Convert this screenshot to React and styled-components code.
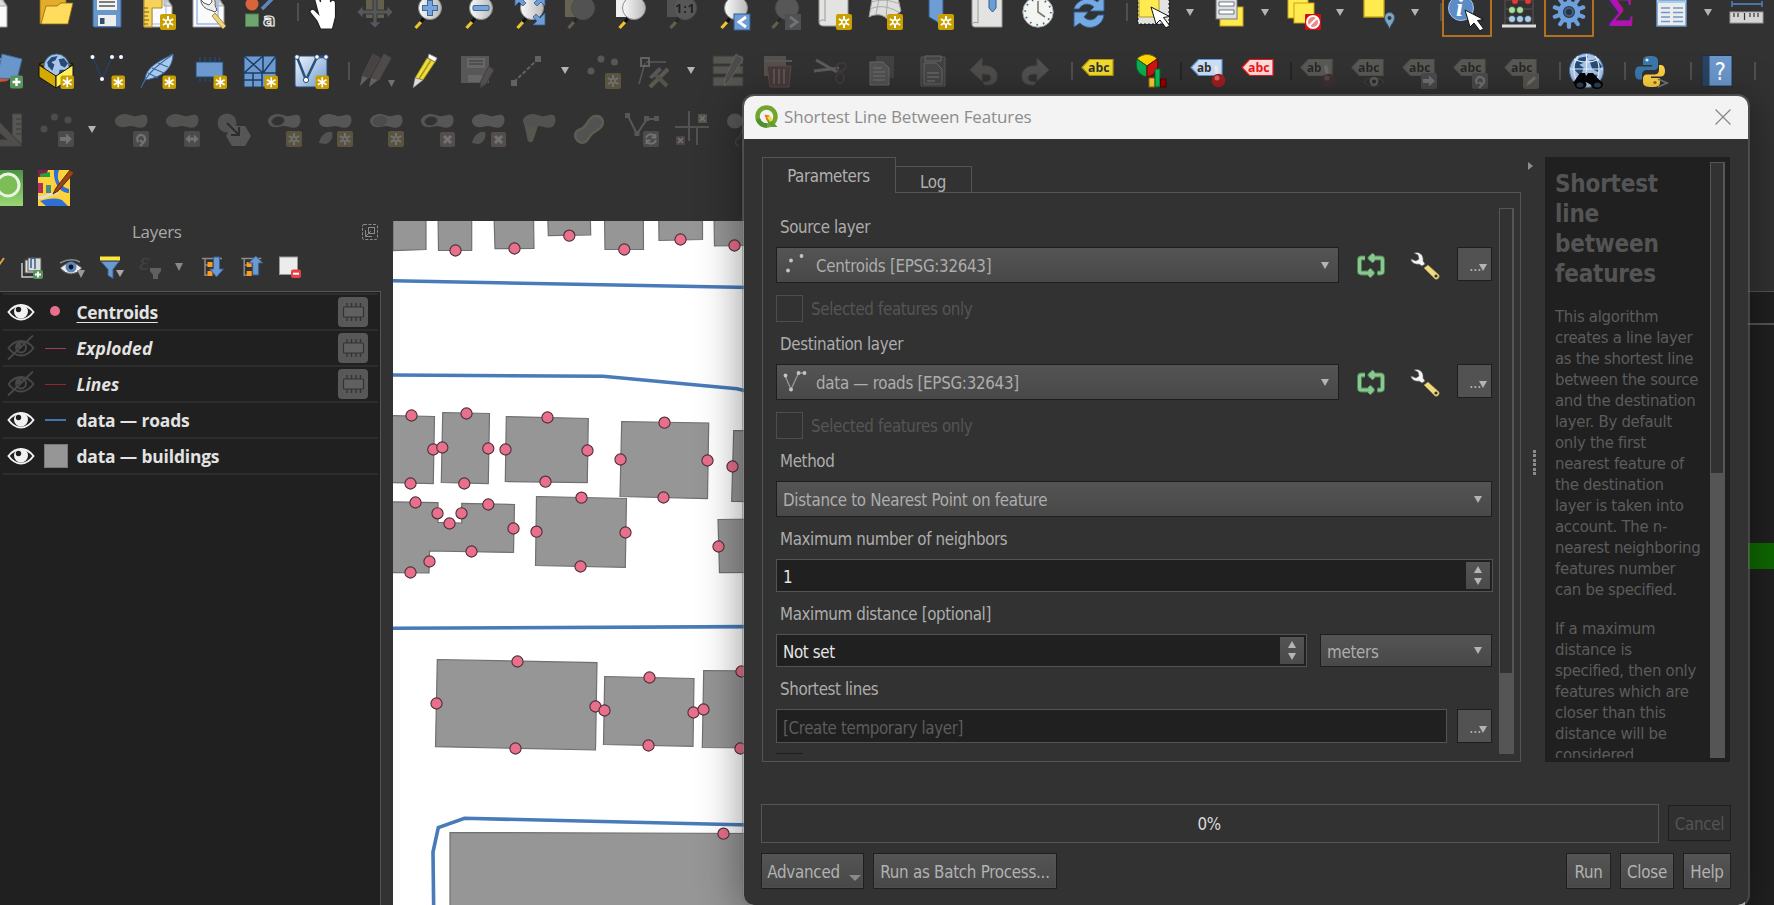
import React from "react";
import styled, { createGlobalStyle, css } from "styled-components";

const ui = '"DejaVu Sans Condensed", "Noto Sans", sans-serif';
const segoe = '"Open Sans", "Noto Sans", sans-serif';

const GlobalStyle = createGlobalStyle`
  html, body { margin: 0; background: #323232; overflow: hidden; }
  * { box-sizing: border-box; }
`;

/* ---------- main window ---------- */
const Desktop = styled.div`
  position: relative;
  width: 1774px;
  height: 905px;
  overflow: hidden;
  background: #323232;
  display: flex;
  flex-direction: column;
  font-family: ${ui};
`;
const Toolbars = styled.div`
  margin-top: -17px;
  height: 235px;
  flex: none;
`;
const ToolRow = styled.div`
  display: flex;
  align-items: center;
  height: 58.5px;
  margin-left: -21px;
  width: 1820px;
`;
const ToolSlot = styled.div`
  width: 51px;
  height: 50px;
  flex: none;
  display: flex;
  align-items: center;
  justify-content: center;
  ${(p) => p.$active && css`
    border: 2px solid #b5701f;
    background: #2f3133;
    margin-right: 1px;
    width: 50px;
  `}
  svg { display: block; overflow: visible; opacity: ${(p) => (p.$dim ? 0.31 : 1)}; filter: ${(p) => (p.$dim ? "saturate(.4)" : "none")}; }
`;
const Sep = styled.div`
  width: ${(p) => p.$w}px;
  flex: none;
  height: 18px;
  border-right: 2px solid ${(p) => (p.$dark ? "#252525" : "#505050")};
`;
const Arrow = styled.span`
  display: block;
  flex: none;
  width: 0;
  height: 0;
  border: solid transparent;
  border-width: 7px 4px 0;
  border-top-color: ${(p) => p.$c || "#b4b4b4"};
`;
const ArrowUp = styled.span`
  display: block;
  width: 0;
  height: 0;
  border: solid transparent;
  border-width: 0 4px 7px;
  border-bottom-color: #b4b4b4;
`;
const ArrowSlot = styled.div`
  width: 24px;
  flex: none;
  padding-left: 7px;
`;
const Body = styled.div`
  flex: 1;
  display: flex;
  min-height: 0;
`;

/* ---------- layers panel ---------- */
const LayersPanel = styled.section`
  width: 381px;
  flex: none;
  display: flex;
  flex-direction: column;
`;
const LayersHeader = styled.header`
  height: 30px;
  display: flex;
  align-items: center;
  padding: 0 3px 3px 132px;
  justify-content: space-between;
  font: 17px ${segoe};
  letter-spacing: -0.3px;
  color: #a9a9a9;
`;
const LayersTools = styled.div`
  height: 43px;
  flex: none;
  svg { display: block; }
`;
const LayerList = styled.div`
  flex: 1;
  background: #202020;
  border: 1px solid #555;
  border-width: 1px 1px 0 0;
  padding: 1px 2px 0 3px;
`;
const LayerRow = styled.div`
  height: 36px;
  display: flex;
  align-items: center;
  border-top: 2px solid #2d2d2d;
  padding: 0 10px 0 4px;
`;
const LayerSymbol = styled.span`
  width: 29px;
  margin-left: 6px;
  display: flex;
  justify-content: center;
`;
const LayerName = styled.span`
  flex: 1;
  margin-left: 6.5px;
  font: ${(p) => (p.$italic ? "italic" : "normal")} 700 17.4px ${segoe};
  letter-spacing: ${(p) => p.$ls || -0.15}px;
  color: #e3e3e3;
  text-decoration: ${(p) => (p.$underline ? "underline" : "none")};
  text-underline-offset: 3px;
  text-decoration-thickness: 1px;
  white-space: nowrap;
`;
const Dot = styled.i`
  width: 10px; height: 10px; border-radius: 50%; background: #e8708c; margin: -2px 2px 0 0;
`;
const Dash = styled.i`
  width: 21px; height: ${(p) => p.$h}px; background: ${(p) => p.$c};
`;
const Swatch = styled.i`
  width: 24px; height: 24px; background: #969696; border: 1px solid #777;
`;
const ChipBadge = styled.span`
  width: 30px; height: 30px; border-radius: 4px; background: #585858;
  svg { display: block; }
`;

/* ---------- map and side dock ---------- */
const Gutter = styled.div`width: 12px; flex: none;`;
const MapSvg = styled.svg`
  display: block;
  flex: none;
  width: 1352px;
  height: 684px;
  margin-top: 3px;
  background: #fff;
`;
const SideDock = styled.aside`
  flex: 1;
  padding-top: 73px;
  display: flex;
  flex-direction: column;
  background: #323232;
`;
const DockHeader = styled.div`
  height: 34px; background: #202020; border: solid #555; border-width: 1px 0 2px;
`;
const DockBlock = styled.div`
  height: ${(p) => (p.$h ? p.$h + "px" : "auto")};
  flex: ${(p) => (p.$h ? "none" : 1)};
  background: ${(p) => (p.$green ? "#0f6a00" : "#202020")};
`;

/* ---------- dialog ---------- */
const Dialog = styled.div`
  position: absolute;
  left: 742px;
  top: 94px;
  width: 1008px;
  height: 813px;
  border: 2px solid rgba(110, 110, 110, 0.5);
  border-radius: 12px;
  background: #323232;
  background-clip: padding-box;
  box-shadow: 0 6px 44px rgba(0, 0, 0, 0.42);
  overflow: hidden;
`;
const TitleBar = styled.header`
  height: 43px;
  background: #f3f3f3;
  display: flex;
  align-items: center;
  padding: 0 17px 1px 11px;
  font: 17px ${segoe};
  letter-spacing: -0.12px;
  color: #8c8c8c;
  span { flex: 1; margin: -1px 0 0 5px; white-space: nowrap; }
`;
const Content = styled.div`
  padding: 18px 17px 0;
`;
const Upper = styled.div`
  display: flex;
  height: 605px;
  padding-left: 1px;
`;
const TabWidget = styled.div`
  width: 759px;
  display: flex;
  flex-direction: column;
`;
const TabBar = styled.div`
  display: flex;
  align-items: flex-end;
  height: 35px;
`;
const Tab = styled.div`
  width: ${(p) => p.$w}px;
  height: ${(p) => (p.$on ? 36 : 26)}px;
  margin-bottom: ${(p) => (p.$on ? -1 : 0)}px;
  border: 1px solid #555;
  border-bottom: 0;
  border-left-width: ${(p) => (p.$on ? 1 : 0)}px;
  background: #323232;
  position: relative;
  text-align: center;
  padding: ${(p) => (p.$on ? 8 : 5)}px 1px 0 0;
  font-size: 16.8px;
  line-height: 20px;
  letter-spacing: -0.36px;
  color: #b0b0b0;
`;
const TabPane = styled.div`
  flex: 1;
  min-height: 0;
  border: 1px solid #555;
  display: flex;
  padding: 0 6px 0 13px;
`;
const Form = styled.div`
  width: 717px;
  padding-top: 24px;
  overflow: hidden;
`;
const FieldLabel = styled.label`
  display: block;
  height: 20px;
  line-height: 20px;
  margin: 0 0 10px 4px;
  font-size: 16.8px;
  letter-spacing: -0.37px;
  color: #adadad;
  white-space: nowrap;
`;
const FieldRow = styled.div`
  display: flex;
  width: ${(p) => p.$w || 716}px;
  margin-bottom: ${(p) => p.$mb ?? 12}px;
  gap: ${(p) => p.$gap ?? 0}px;
`;
const Combo = styled.div`
  flex: ${(p) => (p.$w ? "none" : 1)};
  width: ${(p) => (p.$w ? p.$w + "px" : "auto")};
  height: ${(p) => p.$h || 36}px;
  border: 1px solid #1e1e1e;
  background: linear-gradient(#545454, #484848);
  display: flex;
  align-items: center;
  padding: 0 9px 0 6px;
  font-size: 16.8px;
  letter-spacing: -0.29px;
  color: #adadad;
  white-space: nowrap;
  span:first-of-type { flex: 1; padding-top: 2px; }
  svg { margin-right: 8px; flex: none; }
`;
const IconSlot = styled.div`
  width: 54px;
  display: flex;
  align-items: center;
  justify-content: center;
  padding-top: 2px;
`;
const MoreButton = styled.button`
  width: 35px;
  height: 34px;
  border: 1px solid #1e1e1e;
  background: #525252;
  padding: 8px 3px 0 11px;
  display: flex;
  align-items: center;
  font: 16px ${ui};
  letter-spacing: -0.6px;
  color: #b0b0b0;
  ${Arrow} { margin: -1px 0 0 -2px; }
  span:first-child { line-height: 16px; margin-top: -4px; }
`;
const Check = styled.div`
  display: flex;
  align-items: center;
  height: 27px;
  margin-bottom: 12px;
  gap: 8px;
  font-size: 16.8px;
  letter-spacing: -0.36px;
  color: #555;
  i { width: 27px; height: 27px; border: 1px solid #4e4e4e; }
  span { padding-top: 0; }
`;
const Input = styled.div`
  flex: 1;
  height: ${(p) => p.$h || 33}px;
  border: 1px solid #535353;
  background: #202020;
  display: flex;
  align-items: center;
  justify-content: space-between;
  padding: 1px 2px 0 6px;
  font-size: 16.8px;
  letter-spacing: -0.36px;
  color: ${(p) => (p.$ghost ? "#5c5c5c" : "#e6e6e6")};
  > span { padding-top: 2px; }
`;
const Spin = styled.div`
  width: 24px;
  height: 27px;
  margin-top: -1px;
  background: linear-gradient(#545454, #4a4a4a);
  display: flex;
  flex-direction: column;
  align-items: center;
  justify-content: center;
  gap: 5px;
`;
const ClippedCheck = styled.div`
  width: 27px;
  height: 1px;
  background: #1e1e1e;
`;
const ScrollTrack = styled.div`
  width: 15px;
  flex: none;
  margin: ${(p) => p.$m};
  background: #555;
`;
const ScrollThumb = styled.div`
  height: ${(p) => p.$h}px;
  background: #323232;
  border: 1px solid #565656;
  border-right-width: 2px;
`;
const Splitter = styled.div`
  width: 24px;
  padding-left: 7px;
  i {
    display: block; width: 0; height: 0; margin-top: 5px;
    border: solid transparent; border-width: 4px 0 4px 5px; border-left-color: #8e8e8e;
  }
`;
const Grip = styled.div`
  margin: 280px 0 0 5px;
  width: 3px;
  height: 25px;
  background: repeating-linear-gradient(#8a8a8a 0 3px, transparent 3px 4.4px);
`;
const HelpPane = styled.article`
  width: 185px;
  background: #202020;
  display: flex;
  justify-content: space-between;
`;
const HelpText = styled.div`
  padding-left: 10px;
  margin: 5px 0 4px;
  overflow: hidden;
  color: #5c5c5c;
  h2 { font: bold 24px/30px ${ui}; letter-spacing: -0.2px; margin: 7px 0 17px; color: #545454; }
  p { font: 16.6px/21px ${ui}; letter-spacing: -0.28px; margin: 0 0 18px; white-space: nowrap; }
`;
const Footer = styled.div`
  display: flex;
  gap: 9px;
  margin-top: ${(p) => p.$mt}px;
  width: 970px;
`;
const Progress = styled.div`
  flex: 1;
  height: 39px;
  border: 1px solid #555;
  text-align: center;
  line-height: 38px;
  font-size: 16.8px;
  letter-spacing: -0.4px;
  padding-right: 2px;
  color: #dadada;
`;
const Button = styled.button`
  width: ${(p) => p.$w}px;
  height: 36px;
  margin-top: ${(p) => (p.$off ? 1 : 0)}px;
  flex: none;
  border: 1px solid #1e1e1e;
  outline: 1px solid ${(p) => (p.$off ? "transparent" : "rgba(90,90,90,.25)")};
  outline-offset: -2px;
  background: ${(p) => (p.$off ? "#303030" : "linear-gradient(#545454, #484848)")};
  color: ${(p) => (p.$off ? "#545454" : "#b2b2b2")};
  font: 16.8px ${ui};
  letter-spacing: -0.26px;
  padding: 2px 0 0;
  display: flex;
  align-items: center;
  justify-content: center;
  white-space: nowrap;
  i { border: solid transparent; border-width: 6px 6px 0; border-top-color: #8a8a8a; margin: 12px -3px 0 9px; }
`;
const Spacer = styled.div`flex: 1;`;

/* ---------- icon fragments, drawn on a 36px grid ---------- */
const badgeFill = { star: "#c9a000", arrow: "#7b8590", rot: "#7b8590", h: "#7b8590", x: "#c08080", pen: "#b0a060", refresh: "#7b8590" };
const Flake = ({ s = 13.5, glyph = "star" }) => {
  const c = 36 - s / 2;
  const r = s * 0.34;
  const fill = badgeFill[glyph];
  return (
    <g>
      <rect x={36 - s} y={36 - s} width={s} height={s} rx="2" fill={fill} />
      <g stroke="#fff" strokeWidth={s / 8} fill="none" transform={`translate(${c} ${c})`}>
        {glyph === "star" && [0, 60, 120].map((a) => <path key={a} d={`M0 ${-r * 1.1}V${r * 1.1}`} transform={`rotate(${a})`} />)}
        {glyph === "star" && s > 14 && <circle r="2.2" fill={fill} strokeWidth="1.4" />}
        {glyph === "arrow" && <path d="M-6 -2h6v-3.5l6 5.5-6 5.500v-3.500h-6z" fill="#fff" stroke="none" />}
        {glyph === "h" && <path d="M-6.500 0l4.500-4.500v3h4v-3l4.500 4.500-4.500 4.500v-3h-4v3z" fill="#fff" stroke="none" />}
        {glyph === "x" && <path d="M-3.500 -3.500l7 7M3.500 -3.500l-7 7" strokeWidth="3" />}
        {glyph === "rot" && <path d="M-2.500 3a4 4 0 1 1 4.500 .5M-1 1l3 3-3 3" strokeWidth="2.200" />}
        {glyph === "pen" && <path d="M-4.500 4.500l2-4 6-5 1 2-5 5z" fill="#fff" strokeWidth=".5" />}
        {glyph === "refresh" && <path d="M-5 -1a5 5 0 0 1 9-1.500M4.500 -5v3.500h-4M5 1a5 5 0 0 1-9 1.500M-4.500 5v-3.500h4" strokeWidth="1.800" />}
      </g>
    </g>
  );
};
const Lens = ({ children, fill = "url(#lens)" }) => (
  <g>
    <path d="M7.500 34l5.500-6" stroke="#f0c22e" strokeWidth="3.200" />
    <path d="M13 28l3-4" stroke="#111" strokeWidth="3.200" />
    <circle cx="22" cy="14" r="11.500" fill={fill} stroke="#8c8c8c" strokeWidth="1" />
    {children}
  </g>
);
const Gem = ({ c = "#9a9c90" }) => (
  <path d="M3 7c5-6 12-4 17-2 4 1 8-2 12-1 4 2 3 10-1 12-5 2-9-1-14-1-5 1-9 2-12 0-3-2-4-6-2-8z" fill={c} />
);
const Ring = ({ hole = "#323232", children }) => (
  <g>
    <Gem c="#a8a8a8" />
    <ellipse cx="12" cy="10" rx="6.500" ry="4.500" transform="rotate(-12 12 10)" fill={hole} stroke="#777" />
    {children}
  </g>
);
const Tag = ({ fill, edge, text = "#333", label = "abc" }) => (
  <g>
    <path d="M2 14.500L9.500 6.500H33V22.500H9.500z" fill={fill} stroke={edge} strokeWidth="1.200" />
    <text x="8" y="18.500" textLength={label === "ab" ? 14.5 : 21.5} lengthAdjust="spacingAndGlyphs" fontFamily="Open Sans" fontWeight="700" fontSize="12" fill={text}>{label}</text>
  </g>
);
const Pin = () => (
  <g>
    <path d="M27 14l1.500 8" stroke="#eee" strokeWidth="3.500" strokeLinecap="round" />
    <circle cx="29.500" cy="27.500" r="6.800" fill="#a01f22" />
    <circle cx="28" cy="25" r="2.500" fill="#e88" opacity=".7" />
  </g>
);
const Page = ({ x = 4, w = 28 }) => (
  <g>
    <path d={`M${x} 0H${x + w - 8}L${x + w} 12V33H${x}z`} fill="#fbfbfb" stroke="#9a9a9a" />
    <path d={`M${x + w - 8} 3v9h8z`} fill="#ddd" stroke="#888" strokeWidth=".7" />
  </g>
);
const Pointer = ({ x, y }) => (
  <path transform={`translate(${x} ${y})`} d="M0 0l5 17 4-4 6 8 3.500-2.500-6-8 6-1z" fill="#fff" stroke="#111" strokeWidth="1" />
);
const Globe = ({ cx, cy, r }) => (
  <g>
    <circle cx={cx} cy={cy} r={r} fill="#a9c6ea" stroke="#456f9f" />
    <path transform={`translate(${cx} ${cy}) scale(${r / 12})`} d="M-9-4l4-5 6-1-2 4-4 2 3 2-2 6-4-4zM2-7l5-1 4 5-3 4-4-2-1-3zM3 3l5 0-3 6-3-1z" fill="#274b77" />
  </g>
);
const Wrench = () => (
  <g>
    <path d="M15 17l5 2 2-2-2-5c1-4-1-7-4-9l1 6-3 3-5-2-3-3c0 5 4 9 9 10z" transform="translate(4 -1)" fill="#eee" stroke="#555" strokeWidth="1" />
    <path d="M24 19l11 13-3 3-11-13z" fill="#efd67a" stroke="#8a7430" strokeWidth=".8" />
  </g>
);

const I = {
  newPage: <Page x={-4} w={24} />,
  folder: <g stroke="#8a6a10" strokeWidth=".8"><path d="M2 30V2h26v8" fill="#e3ad2b" /><path d="M3 30L8 12h11l4-3h12L30 30z" fill="#ffdc5c" /></g>,
  save: <g><path d="M4 2h28v31H5l-1-1z" fill="#6a97cb" stroke="#3c6290" /><rect x="8" y="0" width="20" height="16" fill="#f4f4f4" /><path d="M10 8h16M10 12h16M10 4h16" stroke="#555" strokeWidth="1.300" /><rect x="9" y="21" width="18" height="11" fill="#eee" /><rect x="11" y="24" width="4.500" height="6" fill="#2f4f77" /></g>,
  layout: <g><Page x={4} w={28} /><rect x="12" y="5" width="14" height="25" fill="none" stroke="#9cb6ee" /><path d="M4 0h18v14h-10V33H4z" fill="#f6d25a" stroke="#b08a1c" /><path d="M4 14h4M4 18h5M4 22h4M4 26h5M4 30h4" stroke="#7a5c00" /><Flake s={16} /></g>,
  manager: <g><Page x={2} w={31} /><rect x="6" y="4" width="21" height="26" fill="none" stroke="#9cb6ee" strokeWidth="1.500" /><Wrench /></g>,
  style: <g><circle cx="10" cy="10" r="6.500" fill="#d9643a" /><path d="M20 15L32 3" stroke="#5a88c0" strokeWidth="3.500" /><rect x="3.500" y="20" width="13" height="12.500" fill="#6fa56f" stroke="#4c7c4c" /><text x="21" y="32" fontFamily="DejaVu Sans" fontSize="18.500" fontWeight="700" fill="#444" stroke="#eee" strokeWidth="1.200">a</text></g>,
  hand: <path d="M14.500 35L11 27 4.500 19c-2-3 2-5 4-3l4 4L8.500 5c0-4 4-4 5 0l1 3V2c0-3 5-3 5 0v3c1-3 5-3 5 0v3c1-3 5-2 5 1v14l-3 12z" fill="#fff" stroke="#222" strokeWidth="1.200" />,
  pan: <g><rect x="9" y="6" width="18" height="18" fill="#e9c84a" /><path d="M18-2l5 6h-3v12h10v-4l6 6-6 6v-4H20v8h4l-6 6-6-6h4v-8H6v4l-6-6 6-6v4h10V4h-3z" fill="#9ab" stroke="#345" /></g>,
  zoomIn: <Lens><path d="M22 6v16M14 14h16" stroke="#3d6899" strokeWidth="6" /><path d="M22 7v14M15 14h14" stroke="#76a4dc" strokeWidth="4" /></Lens>,
  zoomOut: <Lens><rect x="14" y="11.500" width="16" height="5" rx="1" fill="#76a4dc" stroke="#3d6899" /></Lens>,
  zoomFull: <Lens><g fill="#6d9dd4" stroke="#335c8c" strokeWidth=".8"><path d="M35 31H23l4-4-4-4 3-3 4 4 5-5z" /><path d="M5 0v12l4-4 4 4 3-3-4-4 4-5z" /><path d="M35 0v12l-4-4-4 4-3-3 4-4-4-5z" /></g></Lens>,
  zoomSel: <g><rect x="4" y="0" width="20" height="23" fill="#e6cf52" /><Lens fill="#999" /></g>,
  zoomLayer: <g><rect x="4" y="0" width="18" height="23" fill="#f0f0ee" /><Lens /></g>,
  zoomNative: <g><rect x="4" y="0" width="18" height="23" fill="#999" /><Lens fill="#aaa"><text x="12" y="19" textLength="20" fontFamily="Open Sans" fontWeight="700" fontSize="13" fill="#000">1:1</text></Lens></g>,
  zoomLast: <Lens><rect x="20" y="20" width="16" height="16" fill="#6d9dd4" stroke="#335c8c" /><path d="M32 23l-7 5 7 5" fill="none" stroke="#fff" strokeWidth="2.800" /></Lens>,
  zoomNext: <Lens fill="#aaa"><rect x="20" y="20" width="16" height="16" fill="#8295a8" /><path d="M25 23l7 5-7 5" fill="none" stroke="#fff" strokeWidth="2.800" /></Lens>,
  newMap: <g><path d="M3 0h29v32H8c-3 0-5-1-5-4z" fill="#e3e3e1" stroke="#999" /><path d="M9 0v27c-2-2-4-1-6 1" fill="none" stroke="#999" /><Flake s={16} /></g>,
  new3d: <g><path d="M6 0h24l4 17-12 10c-6-8-14-7-20-4z" fill="#dededc" stroke="#999" /><path d="M13 0L9 20M21 0l-2 24M3 15c9-4 19-3 30 4M5 8c9-3 18-2 28 2" stroke="#aaa" fill="none" /><Flake s={16} /></g>,
  bmNew: <g><path d="M11 0h14v33l-7-6-7-4z" fill="#6d9dd4" stroke="#335c8c" /><Flake s={16} /></g>,
  bmShow: <g><path d="M3 0h30v33H6c-2 0-3-1-3-3z" fill="#e3e3e1" stroke="#999" /><path d="M9 0v29c-2-1-4-1-6 1" fill="none" stroke="#999" /><path d="M20 0h7v14l-3.500 4-3.500-4z" fill="#6d9dd4" stroke="#335c8c" /></g>,
  clock: <g><circle cx="18" cy="18" r="15.200" fill="#f4f4f0" stroke="#aaa" /><circle cx="18" cy="18" r="12.800" fill="none" stroke="#35639b" strokeWidth="1.800" strokeDasharray="1.500 5.200" /><path d="M18 7v11l7 5" fill="none" stroke="#777" strokeWidth="1.600" /></g>,
  refresh: <g fill="#76a9e0" stroke="#2f5f98" strokeWidth="1"><path d="M3 15c2-9 16-14 23-7l7-6v15H19l4-4c-6-5-12-3-15 2z" /><path d="M33 21c-2 13-17 16-24 8l-6 4V18h14l-4 5c5 5 11 3 14-2z" /></g>,
  select: <g><path d="M2 0h31v30H2z" fill="#e3e3e3" stroke="#111" strokeDasharray="2 2" /><rect x="3" y="-2" width="20" height="25" fill="#ffea4f" stroke="#b9991a" /><Pointer x={15} y={13} /></g>,
  selForm: <g><rect x="9" y="13" width="23" height="19" fill="#ffea4f" stroke="#c9a310" /><rect x="5" y="0" width="21" height="25" fill="#dbe0e6" stroke="#777" /><path d="M8 8h15v4H8zM8 16h15v4H8z" fill="#fff" stroke="#555" strokeWidth=".8" /></g>,
  deselect: <g><rect x="2" y="-3" width="20" height="27" fill="#ffea4f" stroke="#c9a310" /><rect x="8" y="9" width="20" height="20" fill="#ffea4f" stroke="#c9a310" /><rect x="19" y="20" width="16" height="16" rx="1" fill="#d40f12" /><circle cx="27" cy="28" r="6" fill="#e88" stroke="#fff" strokeWidth="2" /><path d="M23 32l8-8" stroke="#fff" strokeWidth="2" /></g>,
  selLoc: <g><rect x="3" y="-3" width="20" height="26" fill="#ffea4f" stroke="#c9a310" strokeWidth="1.300" /><path d="M28.500 34.500c-2-5-5-7-5-11a5 5 0 0 1 10 0c0 4-3 6-5 11z" fill="#7da5c4" stroke="#3a5a70" /><circle cx="28.500" cy="24" r="2" fill="#2b3c4a" /></g>,
  identify: <g><circle cx="12" cy="14" r="12.500" fill="#5c8cc6" stroke="#a9c6ea" /><text x="7" y="22" fontFamily="Liberation Serif" fontWeight="700" fontStyle="italic" fontSize="25" fill="#fff">i</text><Pointer x={16} y={16} /></g>,
  abacus: <g><path d="M4 0v31M32 0v31M4 6h28M4 15h28M4 24h28" stroke="#444" strokeWidth="2" /><path d="M1 32h34" stroke="#ddd" strokeWidth="3" /><g stroke="#222" strokeWidth=".6"><g fill="#e23a3a"><circle cx="14" cy="7" r="3.500" /><circle cx="27" cy="7" r="3.500" /></g><g fill="#a9dda0"><circle cx="11" cy="16" r="3.500" /><circle cx="19" cy="16" r="3.500" /></g><g fill="#a6cfee"><circle cx="11" cy="25" r="3.500" /><circle cx="19" cy="25" r="3.500" /><circle cx="27" cy="25" r="3.500" /></g></g></g>,
  gear: <g transform="translate(18 18)" stroke="#6c9fdc" fill="none">{[0, 36, 72, 108, 144].map((a) => <path key={a} d="M0-15V-10M0 10V15" strokeWidth="4.200" strokeLinecap="round" transform={`rotate(${a})`} />)}<circle r="8.500" strokeWidth="5" /><circle r="4" strokeWidth="2" stroke="#3b5f8d" /></g>,
  sigma: <text x="5" y="32" fontFamily="Liberation Serif" fontWeight="700" fontSize="43" textLength="26" lengthAdjust="spacingAndGlyphs" fill="#b012b4">Σ</text>,
  table: <g><path d="M3 0h29v32H3z" fill="#ececec" stroke="#6b9ad0" strokeWidth="1.500" /><path d="M3 0h29v9H3z" fill="#a9cdee" /><path d="M5 5h26" stroke="#5a8fca" strokeWidth="3" /><path d="M7 14h9M19 14h10M7 18.500h9M19 18.500h10M7 23h9M19 23h10M7 27.500h9M19 27.500h10" stroke="#7296c8" strokeWidth="1.300" /></g>,
  ruler: <g><path d="M3 10h30M3 7v6M33 7v6" stroke="#4b75a6" strokeWidth="1.800" /><rect x="1" y="18" width="33" height="11" fill="#d5d5d5" stroke="#999" /><path d="M5 19v4M9 19v4M15.500 19v7M21 19v4M25 19v4M29 19v4" stroke="#333" strokeWidth="1.200" /></g>,

  addLayer: <g><path d="M4 26l22-3-6 5-20 3z" fill="#d0512a" /><path d="M0 5h14v16l-14 4z" fill="#f0b52c" /><path d="M15 1l20 5-5 20-20-1z" fill="#6a97cb" stroke="#3f6ca0" /><rect x="23" y="22.500" width="13" height="13" rx="2" fill="#57935a" /><path d="M29.500 25v8M25.500 29h8" stroke="#fff" strokeWidth="2.400" /></g>,
  geopkg: <g><path d="M1 11L18 5l17 6-17 9z" fill="#8a7100" stroke="#111" /><Globe cx={18.500} cy={13.500} r={12.500} /><path d="M1 12l17 11v12L1 24z" fill="#d4a900" stroke="#111" /><path d="M18 23l17-11v12L18 35z" fill="#ffef5c" stroke="#111" /><Flake /></g>,
  vShape: <g><path d="M4 4l9 22L23 4h9" fill="none" stroke="#27405f" strokeWidth="1.600" /><g fill="#fff"><circle cx="3.500" cy="4" r="2" /><circle cx="13" cy="26" r="2" /><circle cx="23" cy="4" r="2" /><circle cx="32" cy="4" r="2" /></g><Flake /></g>,
  feather: <g><path d="M5 27C6 14 18 9 33 1c0 12-8 23-28 26z" fill="#a9c8ea" stroke="#3b6ba3" /><path d="M1 35C6 22 16 13 32 2M8 20l10 5M12 15l12 5M18 10l10 4" stroke="#3b6ba3" strokeWidth="1.100" fill="none" /><Flake /></g>,
  memory: <g><path d="M9 4v25M14 4v25M19 4v25M24 4v25M28.500 4v25" stroke="#24476f" strokeWidth="1.500" /><rect x="5" y="9" width="27" height="15" fill="#6c9ad0" stroke="#27496f" /><Flake /></g>,
  mesh: <g><rect x="2" y="3" width="32" height="31" fill="#6c9ad0" stroke="#1e3c5f" /><path d="M2 20h32M21 3v17M20 20v14M2 27h18M11 20v14M2 3l19 17M21 3L2 20M34 3L21 20" stroke="#1e3c5f" strokeWidth="1.500" fill="none" /><Flake /></g>,
  vBox: <g><rect x="2" y="3" width="32" height="31" rx="2" fill="url(#sky)" stroke="#27496f" /><path d="M4 4l9 23L24 4h9" fill="none" stroke="#294f7a" strokeWidth="2.500" /><g fill="#fff" stroke="#294f7a"><circle cx="4" cy="4" r="2.300" /><circle cx="13" cy="27" r="2.600" /><circle cx="24" cy="4" r="2.300" /><circle cx="33" cy="4" r="2.300" /></g><Flake /></g>,
  pencils: <g><path d="M16 1l7 4L12 25l-7-2z" fill="#806860" stroke="#8a7a74" /><path d="M27 1l7 4-12 22-8-2z" fill="#a08078" stroke="#8a7a74" /><path d="M5 23l6 2-8 8zM14 25l7 2-9 7z" fill="#ccc" /><path d="M31 27h7l-3.500 7z" fill="#fff" /></g>,
  pencil: <g><path d="M21 1l8 4-2 4-7-4z" fill="#fff" stroke="#999" strokeWidth=".8" /><path d="M19 5l8 4-12 18-8-2z" fill="#efdc3a" stroke="#8f8216" strokeWidth=".8" /><path d="M23 7L11 26" stroke="#a49722" strokeWidth="1.500" /><path d="M7 25l8 2-10 8z" fill="#ddd" stroke="#777" strokeWidth=".5" /></g>,
  saveEdit: <g><path d="M2 3h28v27H2z" fill="#aaa" /><path d="M8 5h18v10H8zM9 22h14v7H9z" fill="#ddd" /><path d="M10 8h14M10 11h14" stroke="#444" /><path d="M30 13l5 4-8 14-6 4 1-7z" fill="#b58a80" stroke="#555" /></g>,
  dashLine: <g><path d="M4 29L28 6" stroke="#ccc" strokeWidth="2" strokeDasharray="4 2" /><path d="M1 27h6v6H1zM25 3h6v6h-6z" fill="#ccc" /></g>,
  points: <g fill="#aaa"><circle cx="6" cy="18" r="3.500" /><circle cx="16" cy="6" r="3.500" /><circle cx="29.500" cy="9" r="3.500" /><Flake s={16} /></g>,
  tools: <g><path d="M10 9h20M9 10L3 31" stroke="#aaa" strokeWidth="1.500" /><rect x="5" y="5" width="8" height="8" fill="none" stroke="#ccc" strokeWidth="2" /><path d="M13 24l10-10 3 3-10 9z" fill="#aaa" /><path d="M32 16L14 34" stroke="#c0ac68" strokeWidth="4" /><path d="M20 22l11 11" stroke="#b59a60" strokeWidth="4" /></g>,
  multiEdit: <g><path d="M2 3h30v8H2zM2 13h30v8H2zM2 24h30v9H2z" fill="#b0a478" stroke="#555" /><path d="M25 1l7 5-14 23-5 4 1-8z" fill="#a08078" stroke="#ddd" strokeWidth=".8" /></g>,
  trash: <g><path d="M2 3h22v20H2z" fill="#b09a70" /><path d="M5 13h24l-2 21H8z" fill="#b04040" stroke="#d77" /><path d="M3 8h27M12 16v15M17 16v15M22 16v15" stroke="#e99" strokeWidth="2" /></g>,
  scissors: <g fill="none"><path d="M3 7l21 12M1 18l25-3" stroke="#bbb" strokeWidth="3" /><ellipse cx="28" cy="14" rx="5" ry="4" stroke="#a44" strokeWidth="1.500" transform="rotate(-30 28 14)" /><ellipse cx="27" cy="25" rx="4" ry="5" stroke="#a44" strokeWidth="1.500" /></g>,
  copy: <g><path d="M12 3h18v22H12z" fill="#666" /><path d="M6 9h13l6 6v17H6z" fill="#999" stroke="#ddd" /><path d="M9 15h9M9 19h12M9 23h12M9 27h12" stroke="#ddd" strokeWidth="1.500" /></g>,
  paste: <g><path d="M6 4h24v29H6z" fill="#666" stroke="#aaa" /><path d="M10 3h16v5H10zM9 10h12l6 6v15H9z" fill="#777" stroke="#ddd" /><path d="M12 20h12M12 24h12M12 28h8" stroke="#ddd" strokeWidth="1.500" /></g>,
  undo: <path d="M4 17L16 5v8c10-1 15 4 15 10 0 7-4 9-12 9l-2-3c5 0 8-1 8-4 0-4-4-4-9-4v7z" fill="#a58870" stroke="#776" />,
  redo: <path d="M32 17L20 5v8C10 12 5 17 5 23c0 7 4 9 12 9l2-3c-5 0-8-1-8-4 0-4 4-4 9-4v7z" fill="#909890" stroke="#676" />,
  tagY: <Tag fill="#f2dc2e" edge="#b89a0a" />,
  diagram: <g><path d="M16 13L6 6c5-6 15-6 20 0z" fill="#ffd400" stroke="#7a6a10" /><path d="M16 13v11C5 22 4 12 6 6z" fill="#0dae50" stroke="#0a5a2a" /><path d="M16 13l10-7c2 6 1 16-10 18z" fill="#d01414" stroke="#600" /><rect x="18" y="25" width="6" height="9" fill="#ffcf30" stroke="#a06a00" /><rect x="24" y="16" width="5" height="18" fill="#0dbe57" stroke="#086030" /><rect x="29.500" y="26" width="5.500" height="8" fill="#900" stroke="#500" /></g>,
  tagB: <g><Tag fill="#cfe1f7" edge="#5c96e0" label="ab" /><Pin /></g>,
  tagR: <Tag fill="#ffdede" edge="#f41515" text="#f41515" />,
  tagPin: <g><Tag fill="#b7b390" edge="#999" text="#111" label="ab" /><Pin /></g>,
  tagEye: <g><Tag fill="#b7b390" edge="#999" text="#111" /><path d="M14 29q10-9 20 0q-10 9-20 0z" fill="#222" stroke="#777" strokeWidth=".8" /><circle cx="24" cy="28.500" r="4.500" fill="#abc" /><circle cx="24" cy="28.500" r="2" fill="#111" /></g>,
  tagMove: <g><Tag fill="#b7b390" edge="#999" text="#111" /><Flake s={16} glyph="arrow" /></g>,
  tagRot: <g><Tag fill="#b7b390" edge="#999" text="#111" /><Flake s={16} glyph="rot" /></g>,
  tagPen: <g><Tag fill="#b7b390" edge="#999" text="#111" /><Flake s={16} glyph="pen" /></g>,
  metaSearch: <g><Globe cx={18.500} cy={17.500} r={17} /><path d="M2 16h33M18.500 1v18M6 6c7 4 18 4 25 0M10 3c-5 7-5 17-2 24M27 3c5 7 5 17 2 24" stroke="#e8f2ff" strokeWidth="1.200" fill="none" /><g fill="#050505"><path d="M12 20h5l1 3 2-3h5l9 10-9 3-7-4-7 4-6-3z" /><ellipse cx="12.500" cy="31.500" rx="6" ry="4.500" /><ellipse cx="29" cy="31.500" rx="6" ry="4.500" /></g><g fill="#2c3f55"><ellipse cx="12" cy="32" rx="3.500" ry="2.500" /><ellipse cx="29.500" cy="32" rx="3.500" ry="2.500" /></g></g>,
  python: <g><path d="M18 3c-7 0-8 2-8 5v4h9v1.500H6C3 13.500 2 17 2 20s1 6.500 4 6.500h3v-5c0-3 2-4.500 5-4.500h7c3 0 4-2 4-4V8c0-4-3-5-7-5z" fill="#3a78ad" /><path d="M19 34c7 0 8-2 8-5v-4h-9v-1.500h10c3 0 4-3 4-5.500s-1-6-4-6h-2v5c0 3-2 4.500-5 4.500h-7c-3 0-4 2-4 4V29c0 4 3 5 9 5z" fill="#ffd243" /><circle cx="14" cy="7" r="1.600" fill="#dce8f2" /><circle cx="22" cy="29.500" r="1.600" fill="#8a6a10" /><path d="M25 26l9 4-9 4" fill="none" stroke="#777" strokeWidth="1.800" /></g>,
  help: <g><rect x="3" y="2.500" width="30" height="31" fill="#2b4462" stroke="#1d2f44" /><rect x="10.500" y="3" width="22" height="29.500" fill="#6c98cc" /><text x="15.500" y="27" fontFamily="DejaVu Sans Condensed" fontSize="24" fill="#fff">?</text></g>,

  angle: <g><path d="M2 0L35 35H2zM9 18v11h12z" fill="#a08a80" fillRule="evenodd" stroke="#777" /><path d="M25.500 3h9v30l-9-9z" fill="#b0a888" stroke="#777" /><path d="M29 8h5M29 13h5M29 18h5M29 23h5" stroke="#444" /></g>,
  movePts: <g fill="#888"><circle cx="6" cy="18" r="3.500" /><circle cx="16.500" cy="6" r="3.500" /><circle cx="30" cy="9" r="3.500" /><Flake s={16} glyph="arrow" /></g>,
  gemRot: <g><Gem /><Flake s={16} glyph="rot" /></g>,
  gemH: <g><Gem /><Flake s={16} glyph="h" /></g>,
  simplify: <g><circle cx="12" cy="12" r="9.500" fill="#999" /><path d="M17 15h13l6 10-6 10H17l-6-10z" fill="#a5a8a8" /><path d="M12 12l12 12M24 16v8h-8" stroke="#222" strokeWidth="2" fill="none" /></g>,
  ringAdd: <Ring><Flake s={16} /></Ring>,
  partAdd: <g><Gem c="#a8a8a8" /><path d="M2 32c2-8 7-12 13-11 2 6-3 12-7 12z" fill="#9a9c90" /><Flake s={16} /></g>,
  fillRing: <Ring hole="#888"><Flake s={16} /></Ring>,
  ringDel: <Ring><Flake s={15} glyph="x" /></Ring>,
  partDel: <g><Gem c="#a8a8a8" /><path d="M2 32c2-8 7-12 13-11 2 6-3 12-7 12z" fill="#9a9c90" /><Flake s={15} glyph="x" /></g>,
  reshape: <g><path d="M3 12h15l-6 18c-3 3-6 0-6-4z" fill="#aaa66c" /><Gem /></g>,
  offset: <path d="M6 30c-5-5-3-10 3-12 7-3 7-12 14-13 7-1 10 6 6 11-3 4-8 4-11 9-3 6-7 9-12 5z" fill="#999" stroke="#c8bc60" strokeWidth="2.500" />,
  vRefresh: <g><path d="M5 5l9 18L24 8h9" fill="none" stroke="#aaa" strokeWidth="2" /><path d="M2 2h5v5H2zM11.500 20h5v5h-5zM21 5h5v5h-5zM31 5h5v5h-5z" fill="#aaa" /><Flake s={16} glyph="refresh" /></g>,
  trim: <g><path d="M1 16h34M15 0v30M23 16v18" stroke="#9a9a9a" strokeWidth="2" /><path d="M24 3h9v9h-9z" fill="#b0a060" /><path d="M2 25h9v9H2z" fill="#a66" /><path d="M4 27l5 5M9 27l-5 5M26 5l5 5M31 5l-5 5" stroke="#fff" strokeWidth="1.500" /></g>,
  split: <g><ellipse cx="10" cy="10" rx="8" ry="7.500" fill="#aaa" /><path d="M14 34c-5 2-4-6 0-7l6-14" stroke="#a55" fill="none" strokeWidth="1.500" /></g>,
  green: <g><rect x="0" y="0" width="36" height="36" fill="url(#grn)" /><circle cx="21" cy="15" r="11" fill="#7dbd58" stroke="#e9f5e1" strokeWidth="3" /></g>,
  mapEdit: <g><rect x="0" y="0" width="32" height="36" fill="#ffd23d" /><path d="M0 0h10l-2 7H0z" fill="#8a1d48" /><path d="M2 4l10-2v5H2z" fill="#1da53c" /><path d="M16 0h5c-3 9 0 16 10 19v4c-9 0-16-10-15-23zM2 31c7-2 14-4 22-1l6 6H8z" fill="#2f70d8" /><rect y="13" width="5" height="10" fill="#b0305c" /><rect x="8" y="15" width="5" height="8" fill="#3f8f7c" /><path d="M0 28c8 0 12-5 20-5" stroke="#ddd" strokeWidth="2.500" fill="none" /><path d="M18 18L32 0l4 3-16 18-5 3z" fill="#994415" stroke="#5f270a" /></g>,
};

/* A token is an icon name ("-" disabled, "!" checked), "v" a drop-down arrow, "|n" a separator n px wide. */
const rows = [
  "newPage folder save layout manager style |13.5 hand pan- zoomIn zoomOut zoomFull zoomSel- zoomLayer zoomNative- zoomLast zoomNext- newMap new3d bmNew bmShow clock refresh |13.5 select v selForm v deselect v selLoc v |14 identify! abacus gear! sigma table v ruler",
  "addLayer geopkg vShape feather memory mesh vBox |13.5 pencils- pencil saveEdit- dashLine- v points- tools- v multiEdit- trash- scissors- copy- paste- undo- redo- |12 tagY diagram |7# tagB tagR |8# tagPin- tagEye- tagMove- tagRot- tagPen- |14 metaSearch |14 python |15 help |13",
  "angle- movePts- v gemRot- gemH- simplify- ringAdd- partAdd- fillRing- ringDel- partDel- reshape- offset- vRefresh- trim- split-",
  "green mapEdit",
];

const Tool = ({ token }) => {
  if (token === "v") return <ArrowSlot><Arrow /></ArrowSlot>;
  if (token[0] === "|") return <Sep $w={parseFloat(token.slice(1))} $dark={token.endsWith("#")} />;
  const name = token.replace(/[-!]$/, "");
  return (
    <ToolSlot $dim={token.endsWith("-")} $active={token.endsWith("!")}>
      <svg width="36" height="36" viewBox="0 0 36 36">{I[name]}</svg>
    </ToolSlot>
  );
};

const Defs = () => (
  <svg width="0" height="0" display="block">
    <defs>
      <linearGradient id="lens"><stop offset="0" stopColor="#fafafa" /><stop offset="1" stopColor="#b9b9b9" /></linearGradient>
      <linearGradient id="sky" x1="0" y1="0" x2="1" y2="1"><stop offset="0" stopColor="#f1f5fa" /><stop offset="1" stopColor="#6c9ad0" /></linearGradient>
      <linearGradient id="grn" x1="0" y1="0" x2="0" y2="1"><stop offset="0" stopColor="#4c9440" /><stop offset="1" stopColor="#9bd873" /></linearGradient>
    </defs>
  </svg>
);

const Eye = ({ off }) => (
  <svg width="28" height="28" viewBox="0 0 28 28">
    <g fill="none" stroke={off ? "#484848" : "#f2f2f2"} strokeWidth="2">
      <path d="M1.500 14Q7 7 14 7t12.500 7Q21 21.500 14 21.500T1.500 14z" />
      <circle cx="14" cy="13.500" r={off ? 5 : 6} fill={off ? "none" : "#f2f2f2"} />
      <circle cx="11.500" cy="11.500" r="2.700" fill={off ? "#484848" : "#202020"} stroke="none" />
      {off && <path d="M1 25.500L26 1.500" strokeWidth="1.800" />}
    </g>
  </svg>
);
const Chip = () => (
  <ChipBadge>
    <svg width="30" height="30" viewBox="0 0 30 30">
      <path d="M9 6v4M13.500 6v4M18 6v4M22.500 6v4M9 20v4M13.500 20v4M18 20v4M22.500 20v4" stroke="#333" strokeWidth="1.300" />
      <rect x="5.500" y="10" width="20" height="10" rx="1" fill="#606060" stroke="#333" strokeWidth="1.200" />
    </svg>
  </ChipBadge>
);

const LayerToolbar = () => (
  <svg width="381" height="43" viewBox="0 248 381 43">
    <path d="M-4 261l3 4 5-7" fill="none" stroke="#e0a040" strokeWidth="2" />
    <g fill="#ddd" stroke="#555"><path d="M22 263v14h13" fill="none" stroke="#ccc" strokeWidth="1.500" /><rect x="25" y="260" width="13" height="13" /><rect x="28" y="258" width="13" height="13" /></g>
    <path d="M31 268v-8a2 2 0 0 1 4 0v9" fill="none" stroke="#365f92" strokeWidth="1.500" />
    <rect x="33" y="270" width="10" height="9" rx="2" fill="#57935a" /><path d="M38 271.500v6M35 274.500h6" stroke="#fff" strokeWidth="1.800" />
    <path d="M60 268q11-10 22 0q-11 12-22 0z" fill="#eee" stroke="#555" /><path d="M60 263q11-6 20-1" fill="none" stroke="#888" strokeWidth="1.500" />
    <circle cx="71" cy="267" r="5.500" fill="#5b87bd" /><circle cx="71" cy="267" r="2.400" fill="#111" /><path d="M77 270h8l-4 8z" fill="#999" />
    <rect x="100" y="256.500" width="20" height="4" fill="#ffe63a" /><path d="M101 261.500h18l-6 8v9l-5-3v-6z" fill="#6c9ad0" stroke="#345f91" /><path d="M116 270h8l-4 7z" fill="#aaa" />
    <text x="139" y="270" fontFamily="Liberation Serif" fontStyle="italic" fontSize="26" fill="#424242">ε</text>
    <path d="M150 268h11v3l-3 4v4h-5v-4l-3-4z" fill="#606060" />
    <path d="M175 263h8l-4 8z" fill="#888" />
    {[0, 1].map((k) => (
      <g key={k} transform={`translate(${k * 39.2} 0)`}>
        <path d="M202 258.500h20M205 258v18M205 265h4M205 275h4" stroke="#8c8c8c" strokeWidth="1.500" fill="none" />
        <rect x="207.500" y="262" width="5" height="5" fill="#ff9c1a" /><rect x="207.500" y="271" width="5" height="5" fill="#ff9c1a" />
        <path d={k ? "M216.500 256l7 7h-4v12h-6v-12h-4z" : "M216.500 277l7-8h-4v-12h-6v12h-4z"} fill="#6c9ad0" stroke="#345f91" />
      </g>
    ))}
    <rect x="279.500" y="257" width="18" height="17.500" fill="#ececea" stroke="#999" /><rect x="291" y="269.500" width="10" height="8.500" rx="2" fill="#e84048" /><path d="M293 273.700h6" stroke="#fff" strokeWidth="2" />
  </svg>
);

const layers = [
  { name: "Centroids", on: true, underline: true, chip: true, ls: -0.3, symbol: <Dot /> },
  { name: "Exploded", italic: true, chip: true, ls: 0.15, symbol: <Dash $h={1} $c="#9a3f5c" /> },
  { name: "Lines", italic: true, chip: true, ls: 0.05, symbol: <Dash $h={1} $c="#8f2a2c" /> },
  { name: "data — roads", on: true, symbol: <Dash $h={2} $c="#4474ad" /> },
  { name: "data — buildings", on: true, symbol: <Swatch /> },
];

const buildings = [
  "393,215 426,215 426,249.500 393,250.700", "438,215 471.700,215 471.700,250.500 438.500,250.500",
  "494,215 533.500,215 534,248.300 495,248.700", "547.700,215 590.300,215 590.700,235 548.300,235.700",
  "604.500,215 643.300,215 643.500,249.500 605,249.500", "658.700,215 702.500,215 702.500,239.500 659,240.500",
  "714,215 750,215 750,245.500 714.500,246", "385,415.500 434.500,416.500 433.300,483.700 385,482.500",
  "442.700,412.500 489.500,413.500 488.300,483.700 441.300,482.500", "506.300,416.500 588.300,418.500 587.300,482.700 505.300,481.500",
  "621.700,421.500 708.700,423 707.500,498.700 620,496.500", "733.700,430.500 760,430.700 760,501.700 731.700,501.300",
  "385,501.700 438,502.700 438,522.300 461.700,523 461.700,503.300 514.500,504.500 513.500,552.500 429.500,551 429,573 385,572.500",
  "536.500,496.500 626.500,498.500 625.300,567.300 535.500,565.500", "718,519.500 760,519 760,572.500 719.500,572.700",
  "437.300,659.500 597,662.700 595.500,750 435.500,746.700", "604.700,676.500 694,678.500 693,746.300 603.500,744.500",
  "703.700,670.500 760,671 760,748 702.300,747.500", "450,832.500 760,833.500 760,915 450,915",
];
const roads = [
  "390,280.700 750,287.500", "390,375 603,376.300 737,388.800 752,392.500", "390,628.300 750,626.600",
  "433.700,910 433,852 438.300,827.500 464.500,818.300 750,825",
];
const centroids = [
  [455.5, 250.5], [514.5, 248.5], [569.3, 235.7], [624.3, 249.5], [680.5, 239.5], [734.5, 245.5], [411.5, 415.5], [433.3, 449.5],
  [410.5, 483.5], [442.3, 447.5], [466.5, 413.5], [488.3, 448.5], [464.3, 483.5], [505.5, 449.5], [547.5, 417.5], [587.5, 450.5],
  [545.5, 481.7], [620.5, 459.5], [664.5, 422.7], [707.5, 460.5], [663.5, 497.5], [732.5, 466.5], [415.5, 502.5], [437.5, 513.3],
  [449.5, 523.5], [461.5, 513.3], [488.3, 504.5], [513.5, 528.5], [471.5, 551.5], [429.5, 561.5], [410.5, 572.5], [536.5, 531.7],
  [581.5, 497.7], [625.5, 532.5], [580.5, 566.5], [718.5, 546.5], [517.5, 661.5], [436.5, 703.5], [595.5, 706.5], [515.5, 748.5],
  [604.5, 710.5], [649.5, 677.5], [693.5, 712.5], [648.5, 745.5], [703.5, 709.5], [741.5, 671.5], [740.5, 748.5], [723.5, 833.7],
];

const PointGlyph = () => (
  <svg width="25" height="26" viewBox="0 0 25 26"><g fill="#c4c4c0"><circle cx="5" cy="18.500" r="1.900" /><circle cx="8" cy="8.500" r="1.900" /><circle cx="18.500" cy="4" r="1.900" /></g></svg>
);
const LineGlyph = () => (
  <svg width="25" height="26" viewBox="0 0 25 26"><path d="M2 6.500l6 14L15.500 4h6" fill="none" stroke="#8f8f8f" strokeWidth="1.500" /><g fill="#c4c4c0"><circle cx="2.500" cy="6.500" r="1.900" /><circle cx="8" cy="20.500" r="1.900" /><circle cx="15.500" cy="4" r="1.900" /><circle cx="21.500" cy="4" r="1.900" /></g></svg>
);
const LoopGlyph = () => (
  <svg width="30" height="26" viewBox="0 0 30 26">
    <g fill="none" strokeLinejoin="round">
      {[["#4a8c52", 4.8], ["#8cc690", 3]].map(([c, w]) => (
        <g key={c} stroke={c} strokeWidth={w}><path d="M9 5H5.500Q3.500 5 3.500 7V18Q3.500 20 5.500 20H15M13 16.500l3.500 3.500-3.500 3.500" /><path d="M21.500 20H24.500Q26.500 20 26.500 18V7Q26.500 5 24.500 5H15.500M18 1.500L14 5l4 3.500" /></g>
      ))}
    </g>
  </svg>
);
const WrenchGlyph = () => (
  <svg width="30" height="30" viewBox="0 0 30 30">
    <path d="M4 2c5-2 10 2 9 8l2 3-3 2-3-2C5 14 1 11 1 8l5 2 3-2-1-4z" fill="#f5f5f5" stroke="#666" strokeWidth=".6" />
    <path d="M14 17l4-3 11 10c1 3-2 5-4 4z" fill="#f0d980" stroke="#a58b3b" strokeWidth=".6" /><circle cx="26" cy="25" r="1.600" fill="#333" />
  </svg>
);

const More = () => <MoreButton><span>...</span><Arrow /></MoreButton>;
const SpinButtons = () => <Spin><ArrowUp /><Arrow /></Spin>;
const LayerPicker = ({ label, icon, value }) => (
  <>
    <FieldLabel>{label}</FieldLabel>
    <FieldRow>
      <Combo $w={563}>{icon}<span>{value}</span><Arrow /></Combo>
      <Spacer />
      <IconSlot><LoopGlyph /></IconSlot>
      <IconSlot><WrenchGlyph /></IconSlot>
      <Spacer />
      <More />
    </FieldRow>
    <Check><i /><span>Selected features only</span></Check>
  </>
);

const helpIntro = ["This algorithm", "creates a line layer", "as the shortest line", "between the source", "and the destination", "layer. By default", "only the first", "nearest feature of", "the destination", "layer is taken into", "account. The n-", "nearest neighboring", "features number", "can be specified."];
const helpMore = ["If a maximum", "distance is", "specified, then only", "features which are", "closer than this", "distance will be", "considered."];
const Lines = ({ of }) => of.map((t) => <React.Fragment key={t}>{t}<br /></React.Fragment>);

const AlgorithmDialog = () => (
  <Dialog>
    <TitleBar>
      <svg width="24" height="24" viewBox="0 0 24 24">
        <circle cx="11.500" cy="11.500" r="9" fill="none" stroke="#72a52c" strokeWidth="4.500" />
        <path d="M3 14a9 9 0 0 0 9 6.500" fill="none" stroke="#4f9032" strokeWidth="4.500" />
        <path d="M13 11l9.500 11h-6L12 16z" fill="#5f9f35" /><path d="M9.500 9.500l5 1 1 4-4 1z" fill="#ee7913" /><path d="M12 12l3-1 3 4-3 2z" fill="#f5dc43" />
      </svg>
      <span>Shortest Line Between Features</span>
      <svg width="16" height="16" viewBox="0 0 16 16"><path d="M.5.5l15 15M15.500.5l-15 15" stroke="#858585" strokeWidth="1.200" /></svg>
    </TitleBar>
    <Content>
      <Upper>
        <TabWidget>
          <TabBar><Tab $on $w={134}>Parameters</Tab><Tab $w={76}>Log</Tab></TabBar>
          <TabPane>
            <Form>
              <LayerPicker label="Source layer" icon={<PointGlyph />} value="Centroids [EPSG:32643]" />
              <LayerPicker label="Destination layer" icon={<LineGlyph />} value="data — roads [EPSG:32643]" />
              <FieldLabel>Method</FieldLabel>
              <FieldRow><Combo><span>Distance to Nearest Point on feature</span><Arrow /></Combo></FieldRow>
              <FieldLabel>Maximum number of neighbors</FieldLabel>
              <FieldRow $w={717}><Input><span>1</span><SpinButtons /></Input></FieldRow>
              <FieldLabel>Maximum distance [optional]</FieldLabel>
              <FieldRow $gap={13}><Input><span>Not set</span><SpinButtons /></Input><Combo $w={172} $h={33}><span>meters</span><Arrow /></Combo></FieldRow>
              <FieldLabel>Shortest lines</FieldLabel>
              <FieldRow $gap={10} $mb={10}><Input $h={34} $ghost><span>[Create temporary layer]</span></Input><More /></FieldRow>
              <ClippedCheck />
            </Form>
            <ScrollTrack $m="15px 0 7px 6px"><ScrollThumb $h={466} /></ScrollTrack>
          </TabPane>
        </TabWidget>
        <Splitter><i /><Grip /></Splitter>
        <HelpPane>
          <HelpText>
            <h2>Shortest<br />line<br />between<br />features</h2>
            <p><Lines of={helpIntro} /></p>
            <p><Lines of={helpMore} /></p>
          </HelpText>
          <ScrollTrack $m="5px 5px 4px 0"><ScrollThumb $h={312} /></ScrollTrack>
        </HelpPane>
      </Upper>
      <Footer $mt={42}><Progress>0%</Progress><Button $w={63} $off>Cancel</Button></Footer>
      <Footer $mt={10}>
        <Button $w={103}>Advanced<i /></Button>
        <Button $w={184}>Run as Batch Process...</Button>
        <Spacer />
        <Button $w={45}>Run</Button>
        <Button $w={54}>Close</Button>
        <Button $w={48}>Help</Button>
      </Footer>
    </Content>
  </Dialog>
);

export default function App() {
  return (
    <>
      <GlobalStyle />
      <Desktop>
        <Defs />
        <Toolbars>
          {rows.map((r, k) => <ToolRow key={k}>{r.split(" ").map((t, n) => <Tool key={n} token={t} />)}</ToolRow>)}
        </Toolbars>
        <Body>
          <LayersPanel>
            <LayersHeader>
              Layers
              <svg width="16" height="16" viewBox="0 0 16 16"><g fill="none" stroke="#8a8a8a"><rect x=".5" y=".5" width="15" height="15" rx="1.500" strokeDasharray="3 1.500" /><rect x="6.500" y="3.500" width="6" height="6" /><path d="M3.500 6v6.500H10M4 12l5-5" /></g></svg>
            </LayersHeader>
            <LayersTools><LayerToolbar /></LayersTools>
            <LayerList>
              {layers.map((l) => (
                <LayerRow key={l.name}>
                  <Eye off={!l.on} />
                  <LayerSymbol>{l.symbol}</LayerSymbol>
                  <LayerName $italic={l.italic} $underline={l.underline} $ls={l.ls}>{l.name}</LayerName>
                  {l.chip && <Chip />}
                </LayerRow>
              ))}
              <LayerRow />
            </LayerList>
          </LayersPanel>
          <Gutter />
          <MapSvg viewBox="393 221 1352 684">
            <g fill="#969696" stroke="#707070" strokeWidth="1.200">{buildings.map((p) => <polygon key={p} points={p} />)}</g>
            <g fill="none" stroke="#487bb8" strokeWidth="3.600">{roads.map((p) => <polyline key={p} points={p} />)}</g>
            <g fill="#e8708c" stroke="#4d3037" strokeWidth="1.100">{centroids.map(([x, y]) => <circle key={x + "-" + y} cx={x} cy={y} r="5.600" />)}</g>
          </MapSvg>
          <SideDock>
            <DockHeader />
            <DockBlock $h={218} />
            <DockBlock $h={26} $green />
            <DockBlock />
          </SideDock>
        </Body>
        <AlgorithmDialog />
      </Desktop>
    </>
  );
}
